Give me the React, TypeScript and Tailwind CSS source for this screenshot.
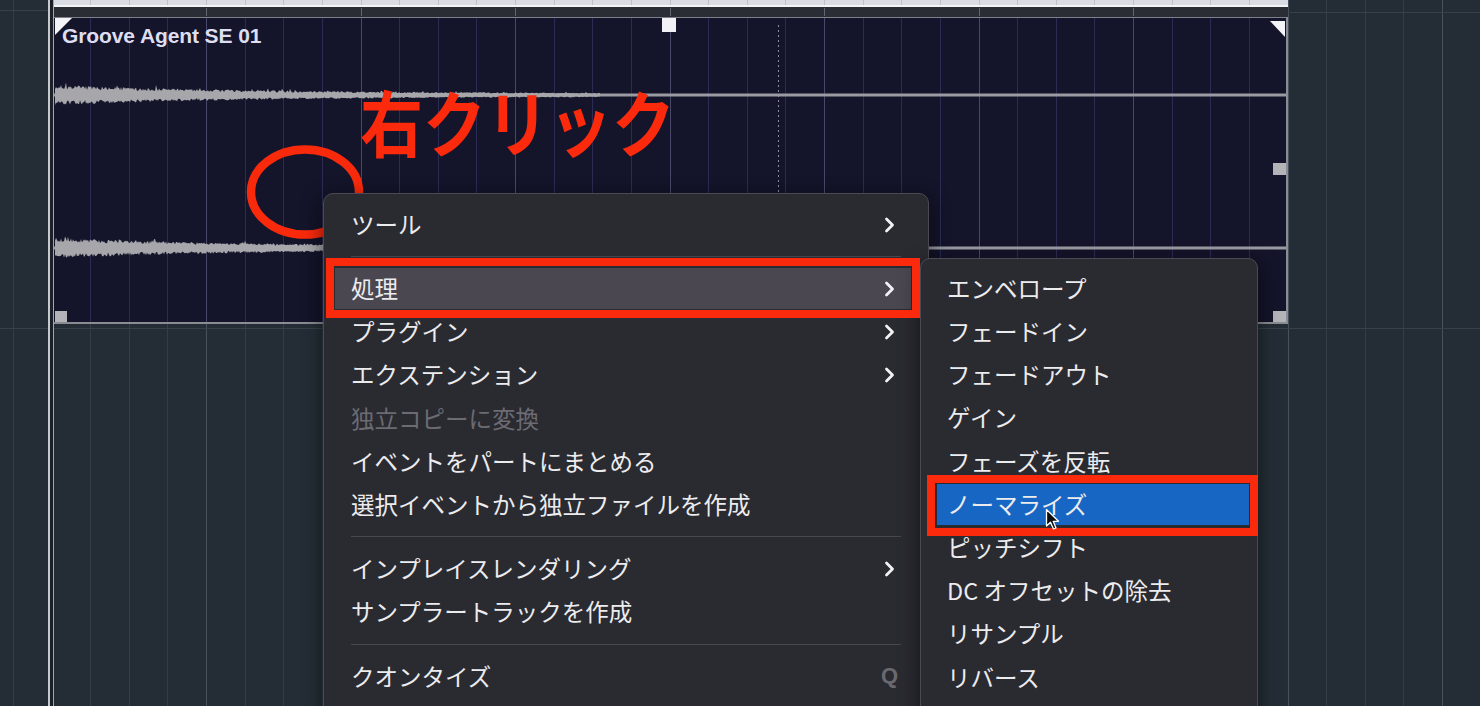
import React from "react";

const GRID = 38.625;
const X0 = 51.6;

function gridXs(min: number, max: number) {
  const xs: { x: number; bar: boolean }[] = [];
  for (let k = -2; k < 45; k++) {
    const x = X0 + GRID * k;
    if (x >= min && x <= max) xs.push({ x: Math.round(x) + 0.5, bar: ((k % 4) + 4) % 4 === 0 });
  }
  return xs;
}

function rng(seed: number) {
  return () => {
    seed |= 0;
    seed = (seed + 0x6d2b79f5) | 0;
    let t = Math.imul(seed ^ (seed >>> 15), 1 | seed);
    t = (t + Math.imul(t ^ (t >>> 7), 61 | t)) ^ t;
    return ((t ^ (t >>> 14)) >>> 0) / 4294967296;
  };
}

function wavePath(cy: number, x1: number, x2: number, seed: number) {
  const r = rng(seed);
  const up: string[] = [];
  const dn: string[] = [];
  for (let x = x1; x <= x2; x += 1) {
    const env = 1.8 + 8.6 * Math.exp(-(x - x1) / 200);
    const spike = r() > 0.93 ? 1.5 : 1;
    up.push(`${x},${(cy - env * spike * (0.55 + 0.45 * r())).toFixed(1)}`);
    dn.push(`${x},${(cy + env * (0.55 + 0.45 * r())).toFixed(1)}`);
  }
  return `M${up.join(" L")} L${dn.reverse().join(" L")} Z`;
}

type Item =
  | { label: string; sub?: boolean; disabled?: boolean; hl?: boolean; keyHint?: string }
  | "sep";

const mainItems: Item[] = [
  { label: "ツール", sub: true },
  "sep",
  { label: "処理", sub: true, hl: true },
  { label: "プラグイン", sub: true },
  { label: "エクステンション", sub: true },
  { label: "独立コピーに変換", disabled: true },
  { label: "イベントをパートにまとめる" },
  { label: "選択イベントから独立ファイルを作成" },
  "sep",
  { label: "インプレイスレンダリング", sub: true },
  { label: "サンプラートラックを作成" },
  "sep",
  { label: "クオンタイズ", keyHint: "Q" },
];

const subItems = [
  "エンベロープ",
  "フェードイン",
  "フェードアウト",
  "ゲイン",
  "フェーズを反転",
  "ノーマライズ",
  "ピッチシフト",
  "DC オフセットの除去",
  "リサンプル",
  "リバース",
];

function Chevron() {
  return (
    <svg width="11" height="18" viewBox="0 0 11 18" className="mr-[3px]">
      <path d="M2.5 3 L8.5 9 L2.5 15" fill="none" stroke="#f2f2f4" strokeWidth="2.8" strokeLinecap="round" strokeLinejoin="round" />
    </svg>
  );
}

function MainMenu() {
  return (
    <div className="absolute left-[323px] top-[193px] w-[606px] h-[560px] rounded-[10px] border border-[#4b4a52] bg-[#2a2a31] pt-[9px] shadow-[0_6px_20px_rgba(0,0,0,0.55)] font-['Noto_Sans_CJK_JP',sans-serif]">
      {mainItems.map((it, i) =>
        it === "sep" ? (
          <div key={i} className="h-[21px] flex items-center px-[27px]">
            <div className="h-px w-full bg-[#48474f]" />
          </div>
        ) : (
          <div key={i} className="h-[43.2px] py-[1px] pl-[11px] pr-[17px]">
            <div
              className={
                it.hl
                  ? "h-full flex items-center justify-between pl-[16px] pr-[13px] bg-[#4a4751]"
                  : "h-full flex items-center justify-between pl-[16px] pr-[13px]"
              }
            >
              <span
                className={
                  it.disabled
                    ? "text-[23.5px] leading-none text-[#6c6b73]"
                    : "text-[23.5px] leading-none text-[#ececee]"
                }
              >
                {it.label}
              </span>
              {it.sub ? <Chevron /> : null}
              {it.keyHint ? (
                <span className="text-[22px] leading-none text-[#6a696f] font-['Liberation_Sans',sans-serif] font-bold">
                  {it.keyHint}
                </span>
              ) : null}
            </div>
          </div>
        )
      )}
    </div>
  );
}

function SubMenu() {
  return (
    <div className="absolute left-[920px] top-[258px] w-[338px] h-[470px] rounded-[10px] border border-[#4b4a52] bg-[#2a2a31] pt-[8px] shadow-[0_6px_20px_rgba(0,0,0,0.55)] font-['Noto_Sans_CJK_JP',sans-serif]">
      {subItems.map((s) => (
        <div key={s} className="h-[43.2px] py-[1px] pl-[16px] pr-[8px]">
          <div
            className={
              s === "ノーマライズ"
                ? "h-full flex items-center pl-[10px] bg-[#1866c3]"
                : "h-full flex items-center pl-[10px]"
            }
          >
            <span className="text-[23.5px] leading-none text-[#ececee]">{s}</span>
          </div>
        </div>
      ))}
    </div>
  );
}

export default function App() {
  const all = gridXs(0, 1480);
  const evLines = gridXs(55, 1285);
  const w1 = wavePath(95, 55, 600, 7);
  const w2 = wavePath(248, 55, 330, 19);

  return (
    <div className="relative w-[1480px] h-[706px] overflow-hidden bg-[#242d36]">
      {/* arrangement background grid */}
      <svg className="absolute inset-0" width="1480" height="706" viewBox="0 0 1480 706">
        {all.map((g) => (
          <line key={g.x} x1={g.x} y1={0} x2={g.x} y2={706} stroke={g.bar ? "#46525d" : "#323d47"} strokeWidth="1" />
        ))}
        <line x1={0} y1={10.5} x2={48} y2={10.5} stroke="#36414b" />
        <line x1={1288} y1={12.5} x2={1480} y2={12.5} stroke="#36414b" />
        <line x1={0} y1={328.5} x2={1480} y2={328.5} stroke="#36414b" />
      </svg>

      <div className="relative flex h-full">
        <div className="w-[48px]" />
        <div className="w-[2px] bg-[#c6cacf]" />
        <div className="w-[3px] bg-[#1c2127]" />
        <div className="w-[1px] bg-[#a3a7ad]" />

        {/* editor column */}
        <div className="w-[1234px] flex flex-col">
          <div className="relative h-[5px] bg-[#d9dce2]">
            <svg className="absolute inset-0" width="1234" height="5" viewBox="54 0 1234 5">
              {evLines.map((g) => (
                <line key={g.x} x1={g.x} y1={0} x2={g.x} y2={5} stroke="#bcc0c7" />
              ))}
            </svg>
          </div>
          <div className="h-[2px] bg-[#f3f4f6]" />
          <div className="relative h-[10px] bg-[#2a2d33]">
            <svg className="absolute inset-0" width="1234" height="10" viewBox="54 0 1234 10">
              {evLines
                .filter((g) => g.bar)
                .map((g) => (
                  <line key={g.x} x1={g.x} y1={1} x2={g.x} y2={9} stroke="#61656d" />
                ))}
            </svg>
          </div>

          {/* audio event */}
          <div className="relative h-[307px] bg-[#14142a] border-t border-t-[#7e818a] border-b-2 border-b-[#8b8b93] border-r-2 border-r-[#8b8b93]">
            <svg className="absolute inset-0" width="1232" height="304" viewBox="54 18 1232 304">
              {evLines.map((g) => (
                <line key={g.x} x1={g.x} y1={18} x2={g.x} y2={322} stroke={g.bar ? "#48486a" : "#2b2b53"} />
              ))}
              <line x1={778.5} y1={25} x2={778.5} y2={200} stroke="#8c8c9c" strokeDasharray="2 3" />
              <rect x={54} y={93.5} width={1232} height={3} fill="#9a9aa2" />
              <rect x={54} y={246.5} width={1232} height={3} fill="#9a9aa2" />
              <path d={w1} fill="#a6a6ab" />
              <path d={w2} fill="#a6a6ab" />
              <polygon points="55,18 72,18 55,35" fill="#f4f4f8" />
              <polygon points="1270,21 1285,21 1285,37" fill="#f4f4f8" />
              <rect x={662} y={18} width={14} height={14} fill="#f2f2f6" />
              <rect x={55} y={311} width={12} height={11} fill="#b4b4b8" />
              <rect x={1273} y={311} width={13} height={11} fill="#b4b4b8" />
              <rect x={1273} y={163} width={13} height={12} fill="#b4b4b8" />
            </svg>
            <div className="relative pl-[8px] pt-[7px] text-[21px] leading-[21px] font-bold tracking-[-0.1px] text-[#dedef0] font-['Liberation_Sans',Arial,sans-serif]">
              Groove Agent SE 01
            </div>
          </div>
          <div className="flex-1" />
        </div>
        <div className="flex-1" />
      </div>

      {/* annotations */}
      <div className="absolute left-[360px] top-[84px] origin-top scale-y-[1.14] text-[63px] leading-none font-bold text-[#fb2a0c] font-['Noto_Sans_CJK_JP',sans-serif]">
        右クリック
      </div>
      <svg className="absolute left-[243px] top-[143px]" width="126" height="100" viewBox="0 0 126 100">
        <ellipse cx="62" cy="49" rx="54" ry="42.5" fill="none" stroke="#f92a0c" strokeWidth="8.5" />
      </svg>

      <MainMenu />
      <SubMenu />

      <div className="absolute left-[326px] top-[258px] w-[594px] h-[60px] border-[8px] border-[#fb2a0c]" />
      <div className="absolute left-[927px] top-[475px] w-[331px] h-[61px] border-[8px] border-[#fb2a0c]" />

      {/* mouse cursor */}
      <svg className="absolute left-[1045px] top-[508px]" width="16" height="24" viewBox="0 0 16 24">
        <path d="M1.5 1.5 L1.5 18 L5.5 14.2 L8.5 21 L11 20 L8.2 13.3 L13.5 13.3 Z" fill="#0c0c0e" stroke="#ffffff" strokeWidth="1.3" strokeLinejoin="round" />
      </svg>
    </div>
  );
}
